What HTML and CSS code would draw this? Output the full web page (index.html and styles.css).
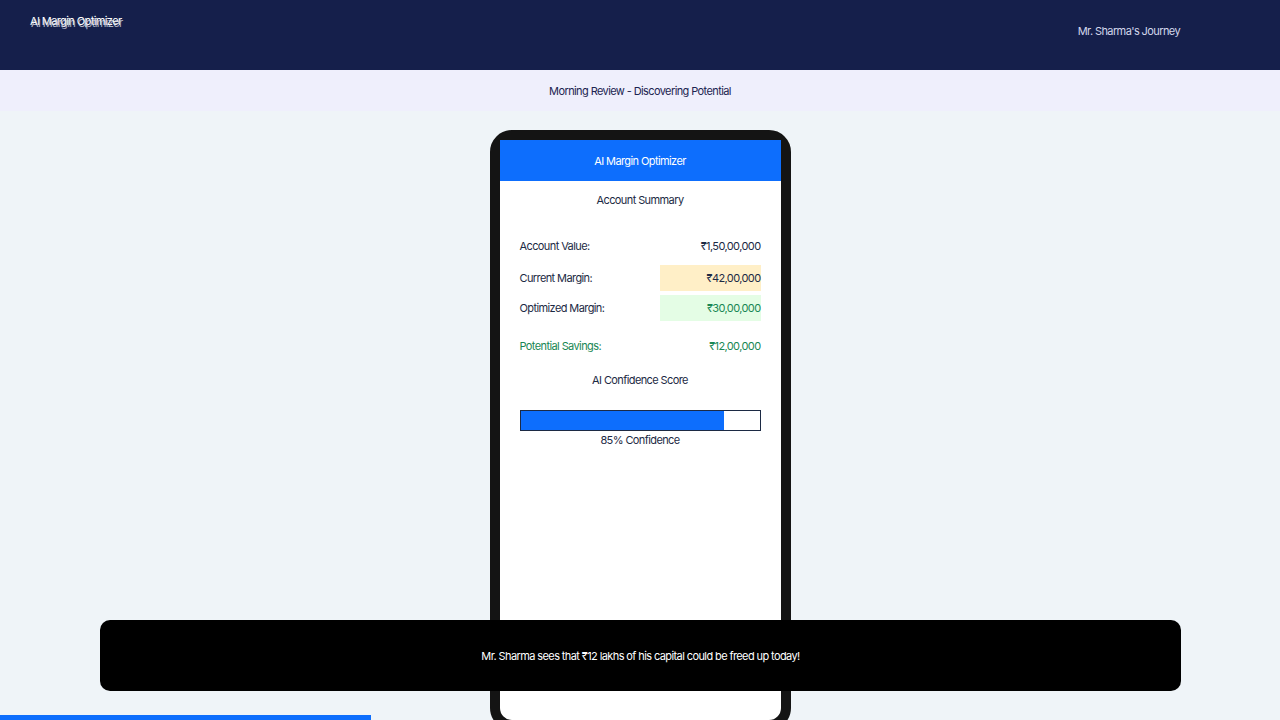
FILE: index.html
```html
<!DOCTYPE html>
<html lang="en">
<head>
    <meta charset="UTF-8">
    <meta name="viewport" content="width=device-width, initial-scale=1.0">
    <title>AI Margin Optimizer - Mr. Sharma's Journey</title>
    <link rel="stylesheet" href="styles.css">
</head>
<body>
    <header class="top-bar">
        <div class="logo" data-text="AI Margin Optimizer">AI Margin Optimizer</div>
        <div class="journey">Mr. Sharma's Journey</div>
    </header>

    <div class="scene-title">Morning Review - Discovering Potential</div>

    <main class="stage">
        <div class="phone">
            <div class="app-header">AI Margin Optimizer</div>
            <div class="app-body">
                <h2 class="section-title">Account Summary</h2>

                <div class="rows">
                    <div class="row first">
                        <span class="label">Account Value:</span>
                        <span class="value">₹1,50,00,000</span>
                    </div>
                    <div class="row">
                        <span class="label">Current Margin:</span>
                        <span class="value current">₹42,00,000</span>
                    </div>
                    <div class="row">
                        <span class="label">Optimized Margin:</span>
                        <span class="value optimized">₹30,00,000</span>
                    </div>
                    <div class="row savings">
                        <span class="label">Potential Savings:</span>
                        <span class="value">₹12,00,000</span>
                    </div>
                </div>

                <h3 class="section-title score">AI Confidence Score</h3>
                <div class="progress">
                    <div class="progress-fill" style="width: 85%"></div>
                </div>
                <div class="progress-label">85% Confidence</div>
            </div>
        </div>
    </main>

    <div class="narration">Mr. Sharma sees that ₹12 lakhs of his capital could be freed up today!</div>
    <div class="story-progress" style="width: 29%"></div>
</body>
</html>
```

FILE: styles.css
```css
* {
    margin: 0;
    padding: 0;
    box-sizing: border-box;
}

body {
    font-family: Inter, "Noto Sans", sans-serif;
    font-size: 11px;
    letter-spacing: -0.6px;
    background: #eff4f8;
    color: #1c2a44;
    height: 720px;
    overflow: hidden;
}

.top-bar {
    height: 70px;
    background: #151f4b;
    display: flex;
    justify-content: space-between;
    align-items: flex-start;
    padding: 14px 100px 0 30px;
}

.logo {
    position: relative;
    color: #ffffff;
    line-height: 14px;
    white-space: nowrap;
}

.logo::after {
    content: attr(data-text);
    position: absolute;
    left: 1px;
    top: 2px;
    white-space: nowrap;
    color: rgba(230, 232, 240, 0.75);
}

.journey {
    color: #d3d8ec;
    margin-top: 10px;
    line-height: 14px;
}

.scene-title {
    height: 41px;
    background: #efeffc;
    color: #1c2450;
    display: flex;
    align-items: center;
    justify-content: center;
}

.stage {
    display: flex;
    justify-content: center;
    padding-top: 19px;
}

.phone {
    width: 301px;
    height: 600px;
    border: 10px solid #141414;
    border-radius: 22px;
    background: #ffffff;
}

.app-header {
    height: 41px;
    background: #0d6efd;
    color: #ffffff;
    display: flex;
    align-items: center;
    justify-content: center;
}

.app-body {
    padding: 12px 20px;
}

.section-title {
    font-size: 11px;
    font-weight: 400;
    text-align: center;
    line-height: 14px;
}

.rows {
    margin-top: 26px;
}

.row {
    display: flex;
    justify-content: space-between;
    align-items: center;
    height: 26px;
    margin-bottom: 4px;
}

.row.first {
    margin-bottom: 6px;
}

.row .value {
    width: 101px;
    height: 26px;
    display: flex;
    align-items: center;
    justify-content: flex-end;
}

.value.current {
    background: #ffefc7;
}

.value.optimized {
    background: #e4fde5;
    color: #198754;
}

.row.savings {
    margin-top: 12px;
    color: #198754;
}

.section-title.score {
    margin-top: 14px;
}

.progress {
    margin-top: 23px;
    height: 21px;
    border: 1px solid #1c2a44;
    background: #ffffff;
}

.progress-fill {
    height: 100%;
    background: #0d6efd;
}

.progress-label {
    text-align: center;
    margin-top: 2px;
    line-height: 14px;
}

.narration {
    position: fixed;
    left: 100px;
    right: 99px;
    top: 620px;
    height: 71px;
    background: #000000;
    color: #ffffff;
    border-radius: 10px;
    display: flex;
    align-items: center;
    justify-content: center;
}

.story-progress {
    position: fixed;
    left: 0;
    bottom: 0;
    height: 5px;
    background: #0d6efd;
}
```
